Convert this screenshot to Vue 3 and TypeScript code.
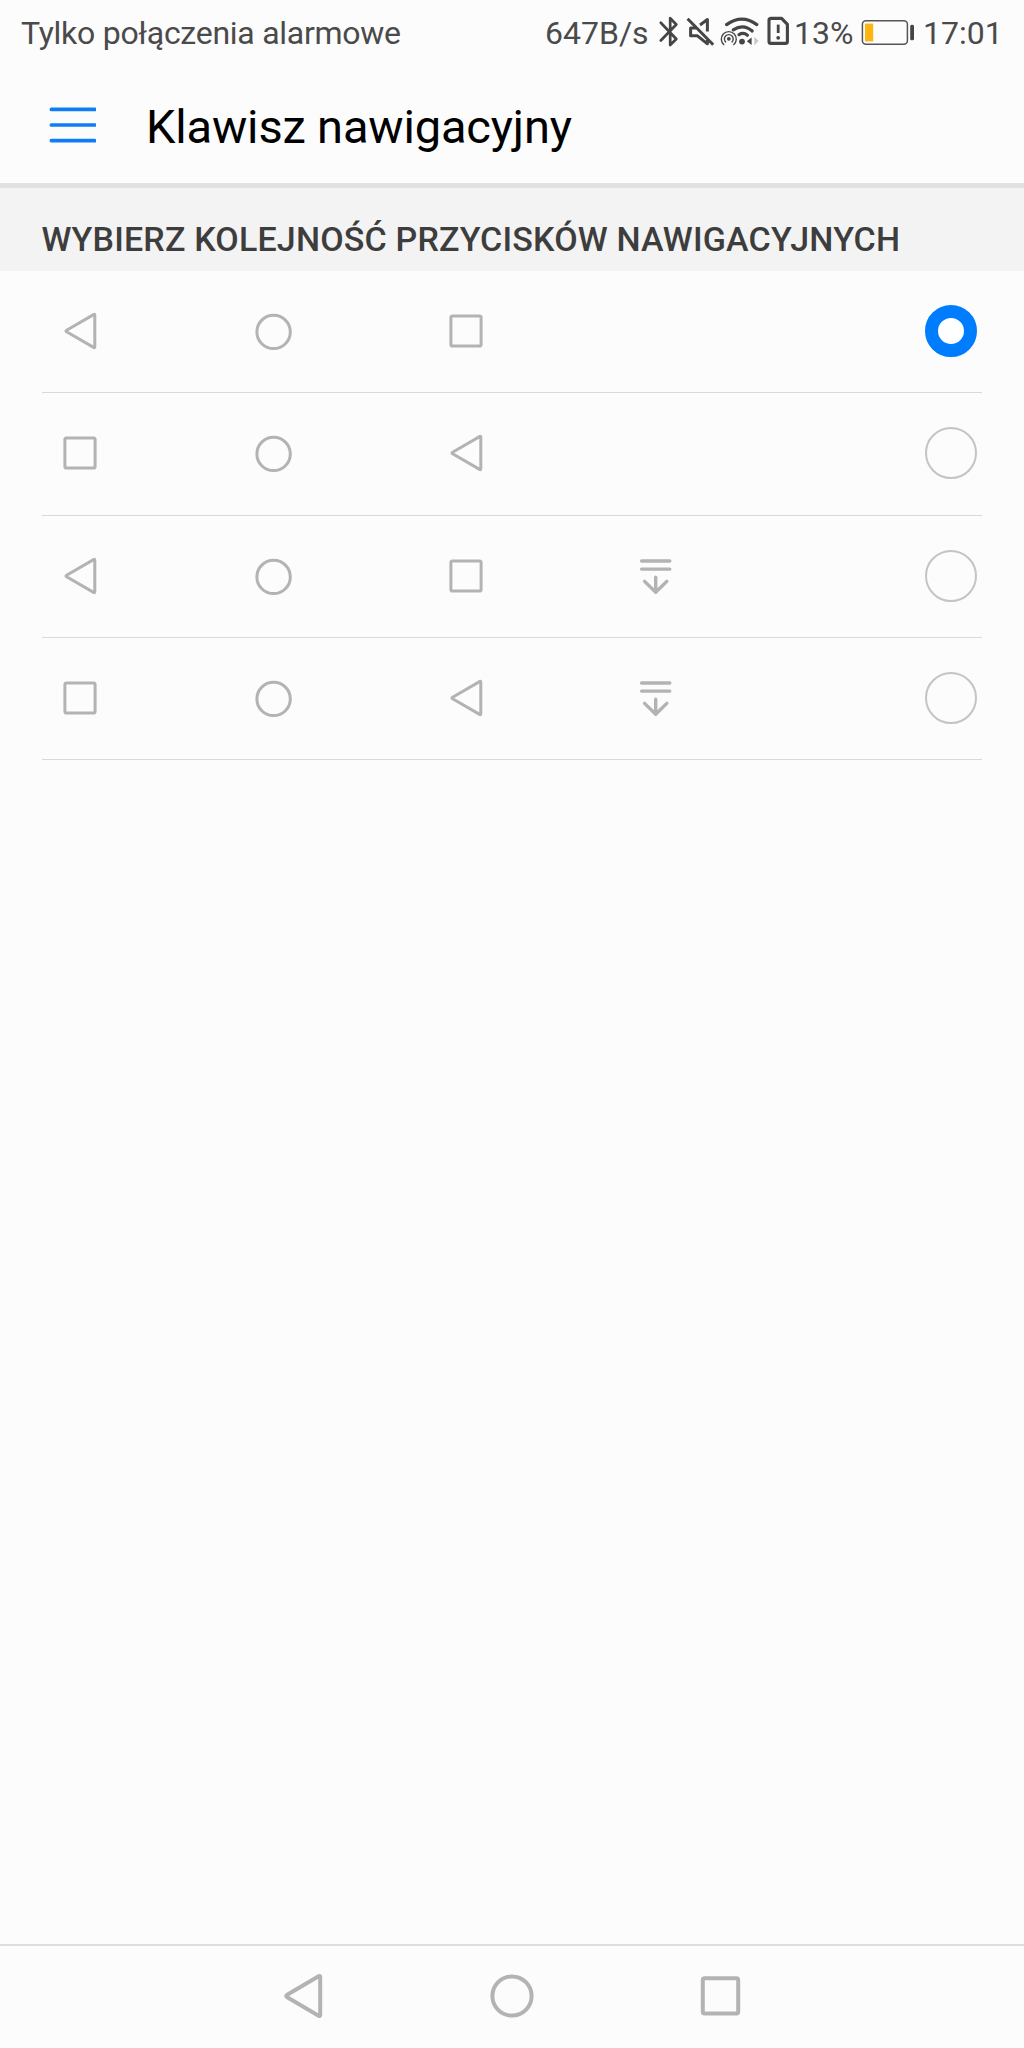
<script setup lang="ts">
import { ref } from 'vue'

type Key = 'back' | 'home' | 'recent' | 'drop'

const layouts: Key[][] = [
  ['back', 'home', 'recent'],
  ['recent', 'home', 'back'],
  ['back', 'home', 'recent', 'drop'],
  ['recent', 'home', 'back', 'drop'],
]
const selected = ref(0)
</script>

<template>
  <div class="screen">
    <header class="status">
      <span class="carrier">Tylko połączenia alarmowe</span>
      <span class="speed">647B/s</span>
      <svg class="indicators" width="136" height="40" viewBox="656 12 136 40" fill="none" stroke="#454545">
        <path d="M660.8 22.8 L676.3 39 L670.2 45 V18.2 L676.3 24.5 L660.8 40.5" stroke-width="2.7" stroke-linecap="round" stroke-linejoin="round" />
        <g stroke-width="3" stroke-linejoin="round">
          <path d="M687.6 18.8 L713.2 44.8" />
          <path d="M700 25 L707.4 19.5 V31.5 M707.4 40 V43.8 L697.5 35.8 H690.6 V28 H696" />
        </g>
        <g stroke-width="3.2" stroke-linecap="round">
          <path d="M726.6 24.6 Q742 13.6 756.8 24.6" />
          <path d="M733.2 29.8 Q743.5 23.2 752.2 31" />
          <path d="M739 34.6 Q743.5 32 747.4 35.2" />
        </g>
        <circle cx="742" cy="41.6" r="2.9" fill="#454545" stroke="none" />
        <path d="M746.8 41.3 L751.6 37.6 V45 Z" fill="#454545" stroke="none" />
        <path d="M754.4 36.8 L758.6 41 L754.4 45.2 Z" fill="#c8c8c8" stroke="none" />
        <circle cx="728.8" cy="38.8" r="1.9" fill="#454545" stroke="none" />
        <path d="M726 42.4 A4.4 4.4 0 1 1 731.6 42.4 M724.2 45 A7.5 7.5 0 1 1 733.4 45" stroke-width="1.4" />
        <path d="M771 18.4 H781.6 L787.4 24.4 V41.4 Q787.4 43.4 785.4 43.4 H771 Q769 43.4 769 41.4 V20.4 Q769 18.4 771 18.4 Z" stroke-width="3.1" stroke-linejoin="round" />
        <path d="M778.2 24.6 V33" stroke-width="2.8" />
        <circle cx="778.2" cy="37.8" r="1.9" fill="#454545" stroke="none" />
      </svg>
      <span class="percent">13%</span>
      <svg class="battery" width="56" height="40" viewBox="860 12 56 40">
        <rect x="862.4" y="20.8" width="45" height="23.4" rx="3.5" fill="none" stroke="#555" stroke-width="1.5" />
        <rect x="865" y="23.6" width="8.2" height="17.8" fill="#ffb511" />
        <rect x="910.2" y="24.8" width="3.8" height="15.4" rx="1.5" fill="#454545" />
      </svg>
      <span class="time">17:01</span>
    </header>

    <div class="toolbar">
      <svg width="48" height="36" viewBox="0 0 48 36" stroke="#0f7df5" stroke-width="3.7" stroke-linecap="round">
        <path d="M3.4 2.4 H46.8 M3.4 18 H46.8 M3.4 33.7 H46.8" />
      </svg>
      <h1>Klawisz nawigacyjny</h1>
    </div>

    <h2>WYBIERZ KOLEJNOŚĆ PRZYCISKÓW NAWIGACYJNYCH</h2>

    <ul class="options">
      <li v-for="(keys, i) in layouts" :key="i" @click="selected = i">
        <svg v-for="key in keys" :key="key" class="key" width="48" height="48" viewBox="0 0 48 48">
          <path v-if="key === 'back'" d="M37.8 8.2 V39.8 Q37.8 41.1 36.6 40.4 L9.6 24.8 Q8.3 24 9.6 23.2 L36.6 7.6 Q37.8 6.9 37.8 8.2 Z" />
          <circle v-else-if="key === 'home'" cx="23.6" cy="24.9" r="16.7" />
          <rect v-else-if="key === 'recent'" x="7.9" y="8.9" width="30.2" height="30.2" rx="1.6" />
          <path v-else d="M5.6 9 H33.8 M5.6 17.1 H33.8 M19.7 25.2 V39.8 M8.6 29.4 L19.7 40.2 L30.8 29.4" stroke-linecap="round" class="heavy" />
        </svg>
        <span class="radio" :class="{ checked: selected === i }"></span>
      </li>
    </ul>

    <nav class="navbar">
      <svg width="48" height="48" viewBox="0 0 48 48">
        <path d="M40.2 5.2 V42.8 Q40.2 44.6 38.6 43.7 L7.2 25.2 Q5.2 24 7.2 22.8 L38.6 4.3 Q40.2 3.4 40.2 5.2 Z" />
      </svg>
      <svg width="48" height="48" viewBox="0 0 48 48"><circle cx="24" cy="24" r="19.6" /></svg>
      <svg width="48" height="48" viewBox="0 0 48 48"><rect x="5.8" y="6.2" width="35.4" height="35.4" rx="1.8" /></svg>
    </nav>
  </div>
</template>

<style>
body {
  margin: 0;
  background: #fcfcfc;
}
</style>

<style scoped>
.screen {
  display: flex;
  flex-direction: column;
  width: 1024px;
  height: 2048px;
  overflow: hidden;
  background: #fcfcfc;
  font-family: Roboto, "Noto Sans", sans-serif;
}
svg {
  display: block;
  flex: none;
}
.status {
  display: flex;
  height: 64px;
  box-sizing: border-box;
  padding-left: 21px;
  color: #4a4a4a;
  font-size: 32px;
  line-height: 66px;
  white-space: nowrap;
}
.carrier {
  width: 524px;
  letter-spacing: -0.27px;
}
.speed {
  width: 111px;
}
.indicators,
.battery {
  margin-top: 12px;
}
.percent {
  width: 66px;
  padding-left: 2px;
}
.time {
  margin-left: 7px;
}
.toolbar {
  display: flex;
  align-items: center;
  height: 119px;
  box-sizing: border-box;
  padding: 3px 0 0 48px;
}
h1 {
  margin: 3px 0 0 50px;
  color: #000;
  font-size: 47px;
  font-weight: 400;
  line-height: 60px;
  letter-spacing: -0.17px;
}
h2 {
  margin: 0;
  height: 88px;
  box-sizing: border-box;
  padding: 31px 0 0 41.5px;
  border-top: 5px solid #e0e0e0;
  background: #f3f3f3;
  color: #3d3d3d;
  font-size: 34px;
  font-weight: 500;
  line-height: 40px;
  letter-spacing: 0.17px;
  white-space: nowrap;
}
.options {
  margin: 0 42px;
  padding: 0;
  list-style: none;
}
li {
  display: flex;
  align-items: center;
  gap: 145px;
  height: 122.35px;
  box-sizing: border-box;
  padding: 0 5px 1.2px 15px;
  border-bottom: 1px solid #d9d9d9;
}
.key {
  fill: none;
  stroke: #b3b3b3;
  stroke-width: 3;
  stroke-linejoin: round;
}
.heavy {
  stroke-width: 3.4;
}
.radio {
  width: 52px;
  height: 52px;
  box-sizing: border-box;
  margin-left: auto;
  border: 2px solid #c4c4c4;
  border-radius: 50%;
}
.radio.checked {
  border: 13px solid #007dff;
  background: #fff;
}
.navbar {
  display: flex;
  justify-content: center;
  align-items: center;
  gap: 160.5px;
  height: 104px;
  box-sizing: border-box;
  margin-top: auto;
  padding-bottom: 2px;
  border-top: 2px solid #dedede;
  fill: none;
  stroke: #b3b3b3;
  stroke-width: 4;
  stroke-linejoin: round;
}
</style>
